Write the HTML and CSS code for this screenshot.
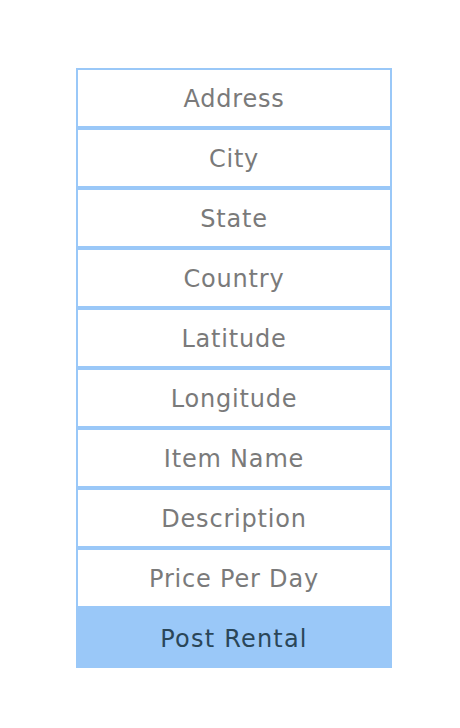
FILE: index.html
```html
<!DOCTYPE html>
<html>
<head>
<meta charset="utf-8">
<link rel="stylesheet" href="styles.css">
</head>
<body>
<form class="rental-form">
  <input class="field" type="text" placeholder="Address">
  <input class="field" type="text" placeholder="City">
  <input class="field" type="text" placeholder="State">
  <input class="field" type="text" placeholder="Country">
  <input class="field" type="text" placeholder="Latitude">
  <input class="field" type="text" placeholder="Longitude">
  <input class="field" type="text" placeholder="Item Name">
  <input class="field" type="text" placeholder="Description">
  <input class="field" type="text" placeholder="Price Per Day">
  <button class="submit" type="button">Post Rental</button>
</form>
</body>
</html>
```

FILE: styles.css
```css
html, body {
  margin: 0;
  padding: 0;
  background: #ffffff;
}
body {
  font-family: "DejaVu Sans", "Open Sans", sans-serif;
}
.rental-form {
  display: flex;
  flex-direction: column;
  width: 316px;
  margin: 68px 0 0 76px;
}
.field {
  box-sizing: border-box;
  height: 60px;
  width: 100%;
  margin: 0;
  border: 2px solid #9ac8f8;
  background: #ffffff;
  text-align: center;
  font-family: inherit;
  font-size: 24px;
  letter-spacing: 0.8px;
  color: #6b6b6b;
  outline: none;
  padding: 2px 0 0 0;
}
.field::placeholder {
  color: #7a7a7a;
  opacity: 1;
}
.submit {
  box-sizing: border-box;
  height: 60px;
  width: 100%;
  margin: 0;
  border: none;
  background: #9ac8f8;
  font-family: inherit;
  font-size: 24px;
  letter-spacing: 1.2px;
  color: #2a4658;
  padding: 2px 0 0 0;
}
```
